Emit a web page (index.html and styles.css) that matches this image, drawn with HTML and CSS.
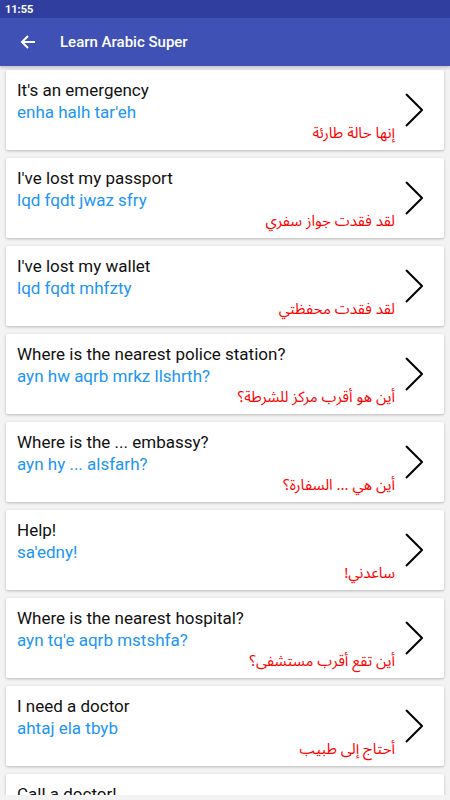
FILE: index.html
```html
<!DOCTYPE html>
<html lang="en">
<head>
    <meta charset="UTF-8">
    <meta name="viewport" content="width=device-width, initial-scale=1.0">
    <title>Learn Arabic Super</title>
    <link rel="stylesheet" href="styles.css">
</head>
<body>
    <div class="status-bar">11:55</div>

    <div class="app-bar">
        <svg class="back" width="16" height="16" viewBox="0 0 16 16">
            <path d="M15 8H2M8 2L2 8l6 6" fill="none" stroke="#fff" stroke-width="2"/>
        </svg>
        <span class="app-title">Learn Arabic Super</span>
    </div>

    <div class="frases">
        <!-- Frase 1 -->
        <div class="frase">
            <div class="textos">
                <div class="ingles">It's an emergency</div>
                <div class="fonetica">enha halh tar'eh</div>
                <div class="arabe" dir="rtl">إنها حالة طارئة</div>
            </div>
            <svg class="flecha" width="18" height="34" viewBox="0 0 18 34"><path d="M1 1l16 16L1 33" fill="none" stroke="#000" stroke-width="2"/></svg>
        </div>

        <!-- Frase 2 -->
        <div class="frase">
            <div class="textos">
                <div class="ingles">I've lost my passport</div>
                <div class="fonetica">lqd fqdt jwaz sfry</div>
                <div class="arabe" dir="rtl">لقد فقدت جواز سفري</div>
            </div>
            <svg class="flecha" width="18" height="34" viewBox="0 0 18 34"><path d="M1 1l16 16L1 33" fill="none" stroke="#000" stroke-width="2"/></svg>
        </div>

        <!-- Frase 3 -->
        <div class="frase">
            <div class="textos">
                <div class="ingles">I've lost my wallet</div>
                <div class="fonetica">lqd fqdt mhfzty</div>
                <div class="arabe" dir="rtl">لقد فقدت محفظتي</div>
            </div>
            <svg class="flecha" width="18" height="34" viewBox="0 0 18 34"><path d="M1 1l16 16L1 33" fill="none" stroke="#000" stroke-width="2"/></svg>
        </div>

        <!-- Frase 4 -->
        <div class="frase">
            <div class="textos">
                <div class="ingles">Where is the nearest police station?</div>
                <div class="fonetica">ayn hw aqrb mrkz llshrth?</div>
                <div class="arabe" dir="rtl">أين هو أقرب مركز للشرطة؟</div>
            </div>
            <svg class="flecha" width="18" height="34" viewBox="0 0 18 34"><path d="M1 1l16 16L1 33" fill="none" stroke="#000" stroke-width="2"/></svg>
        </div>

        <!-- Frase 5 -->
        <div class="frase">
            <div class="textos">
                <div class="ingles">Where is the ... embassy?</div>
                <div class="fonetica">ayn hy ... alsfarh?</div>
                <div class="arabe" dir="rtl">أين هي ... السفارة؟</div>
            </div>
            <svg class="flecha" width="18" height="34" viewBox="0 0 18 34"><path d="M1 1l16 16L1 33" fill="none" stroke="#000" stroke-width="2"/></svg>
        </div>

        <!-- Frase 6 -->
        <div class="frase">
            <div class="textos">
                <div class="ingles">Help!</div>
                <div class="fonetica">sa'edny!</div>
                <div class="arabe" dir="rtl">ساعدني!</div>
            </div>
            <svg class="flecha" width="18" height="34" viewBox="0 0 18 34"><path d="M1 1l16 16L1 33" fill="none" stroke="#000" stroke-width="2"/></svg>
        </div>

        <!-- Frase 7 -->
        <div class="frase">
            <div class="textos">
                <div class="ingles">Where is the nearest hospital?</div>
                <div class="fonetica">ayn tq'e aqrb mstshfa?</div>
                <div class="arabe" dir="rtl">أين تقع أقرب مستشفى؟</div>
            </div>
            <svg class="flecha" width="18" height="34" viewBox="0 0 18 34"><path d="M1 1l16 16L1 33" fill="none" stroke="#000" stroke-width="2"/></svg>
        </div>

        <!-- Frase 8 -->
        <div class="frase">
            <div class="textos">
                <div class="ingles">I need a doctor</div>
                <div class="fonetica">ahtaj ela tbyb</div>
                <div class="arabe" dir="rtl">أحتاج إلى طبيب</div>
            </div>
            <svg class="flecha" width="18" height="34" viewBox="0 0 18 34"><path d="M1 1l16 16L1 33" fill="none" stroke="#000" stroke-width="2"/></svg>
        </div>

        <!-- Frase 9 (cortada por el borde de la pantalla) -->
        <div class="frase">
            <div class="textos">
                <div class="ingles">Call a doctor!</div>
            </div>
        </div>
    </div>
</body>
</html>
```

FILE: styles.css
```css
body {
    font-family: Roboto, "DejaVu Sans", sans-serif;
    margin: 0;
    background-color: #f3f3f3;
    height: 800px;
    overflow: hidden;
}

.status-bar {
    background-color: #303f9f;
    color: white;
    height: 18px;
    font-size: 11px;
    font-weight: bold;
    line-height: 19px;
    padding-left: 5px;
}

.app-bar {
    background-color: #3f51b5;
    height: 48px;
    display: flex;
    align-items: center;
    box-shadow: 0 2px 3px rgba(0, 0, 0, 0.2);
}

.back {
    margin-left: 20px;
    margin-right: 24px;
}

.app-title {
    color: white;
    font-size: 15px;
    font-weight: 500;
}

.frases {
    height: 729px;
    box-sizing: border-box;
    overflow: hidden;
    padding: 4px 6px;
    display: flex;
    flex-direction: column;
    gap: 8px;
}

.frase {
    background-color: white;
    height: 80px;
    flex-shrink: 0;
    box-sizing: border-box;
    border-radius: 2px;
    box-shadow: 0 1px 3px rgba(0, 0, 0, 0.25);
    display: flex;
    align-items: center;
    padding: 0 21px 0 11px;
}

.textos {
    flex: 1;
    align-self: flex-start;
    padding-top: 9px;
    margin-right: 10px;
}

.ingles {
    color: #111;
    font-size: 17px;
    line-height: 22px;
}

.fonetica {
    color: #2196f3;
    font-size: 17px;
    line-height: 22px;
}

.arabe {
    color: #f00;
    font-family: "Noto Sans Arabic", "Noto Naskh Arabic", "DejaVu Sans", sans-serif;
    font-size: 15px;
    line-height: 20px;
}

.flecha {
    flex-shrink: 0;
}
```
